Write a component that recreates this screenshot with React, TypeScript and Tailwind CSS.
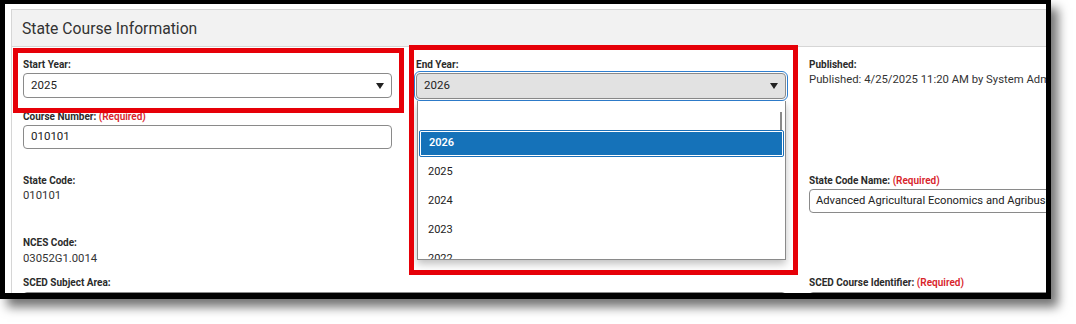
import React from "react";

const Caret = () => (
  <svg width="8" height="6" viewBox="0 0 8 6" className="shrink-0">
    <path d="M0 0 L8 0 L4 6 Z" fill="#222" />
  </svg>
);

const Label = ({ text, required }: { text: string; required?: boolean }) => (
  <div className="h-[13px] leading-[13px] text-[10px] font-bold text-[#2b2b2b] whitespace-nowrap">
    {text}
    {required && <span className="text-[#d8232a] font-semibold"> (Required)</span>}
  </div>
);

const Value = ({ text, className = "" }: { text: string; className?: string }) => (
  <div className={"h-[14px] leading-[14px] text-[11.3px] text-[#333] whitespace-nowrap " + className}>{text}</div>
);

export default function App() {
  const years = ["2025", "2024", "2023", "2022"];
  return (
    <div className="relative w-[1076px] h-[324px] bg-white overflow-hidden" style={{ fontFamily: "Roboto, 'Liberation Sans', sans-serif" }}>
      <div className="w-[1051px] h-[299px] border-black border-l-[5px] border-t-4 border-r-[5px] border-b-[6px] bg-white overflow-hidden shadow-[7px_8px_10px_rgba(0,0,0,0.55)]">
        <div className="ml-[6px] mt-[5px] w-[1100px] h-[400px] border border-[#d6d6d6] bg-white">
          <div className="h-[37px] bg-[#f2f2f2] border-b border-[#d6d6d6] pl-[10px] pt-[1px] flex items-center text-[15.7px] text-[#333]">
            State Course Information
          </div>
          <div className="pl-[11px] pt-[11px]">
            {/* Row 1 */}
            <div className="grid grid-cols-[393px_393px_1fr] h-[52px]">
              <div className="w-[369px]">
                <Label text="Start Year:" />
                <div className="mt-[2px] h-[25px] border border-[#8a8a8a] rounded-[4px] bg-white flex items-center justify-between pl-[7px] pr-[7px]">
                  <span className="text-[11.5px] text-[#222]">2025</span>
                  <Caret />
                </div>
              </div>
              <div className="w-[370px] relative">
                <Label text="End Year:" />
                <div className="mt-[2px] h-[26px] border border-[#8a8a8a] rounded-[4px] bg-[#e2e2e2] flex items-center justify-between pl-[7px] pr-[7px] outline outline-1 outline-offset-1 outline-[#2f7fd0]">
                  <span className="text-[11.5px] text-[#222]">2026</span>
                  <Caret />
                </div>
              </div>
              <div>
                <Label text="Published:" />
                <Value text="Published: 4/25/2025 11:20 AM by System Administrator" className="mt-[2px]" />
              </div>
            </div>
            {/* Row 2 */}
            <div className="grid grid-cols-[393px_393px_1fr] h-[64px]">
              <div className="w-[369px]">
                <Label text="Course Number:" required />
                <div className="mt-[2px] h-[24px] border border-[#8a8a8a] rounded-[4px] bg-white flex items-center pl-[7px]">
                  <span className="text-[11.5px] text-[#222]">010101</span>
                </div>
              </div>
              <div />
              <div />
            </div>
            {/* Row 3 */}
            <div className="grid grid-cols-[393px_393px_1fr] h-[62px]">
              <div>
                <Label text="State Code:" />
                <Value text="010101" className="mt-[2px]" />
              </div>
              <div />
              <div>
                <Label text="State Code Name:" required />
                <div className="mt-[2px] h-[24px] w-[370px] border border-[#8a8a8a] rounded-[4px] bg-white flex items-center pl-[6px]">
                  <span className="text-[11.2px] text-[#222] whitespace-nowrap">Advanced Agricultural Economics and Agribusiness</span>
                </div>
              </div>
            </div>
            {/* Row 4 */}
            <div className="grid grid-cols-[393px_393px_1fr] h-[40px]">
              <div>
                <Label text="NCES Code:" />
                <Value text="03052G1.0014" className="mt-[3px]" />
              </div>
              <div />
              <div />
            </div>
            {/* Row 5 */}
            <div className="grid grid-cols-[393px_393px_1fr]">
              <div className="col-span-2">
                <Label text="SCED Subject Area:" />
                <div className="mt-[3px] h-[25px] w-[763px] border border-[#8a8a8a] rounded-[4px] bg-white" />
              </div>
              <div>
                <Label text="SCED Course Identifier:" required />
                <div className="mt-[3px] h-[25px] w-[370px] border border-[#8a8a8a] rounded-[4px] bg-white" />
              </div>
            </div>
          </div>
        </div>
      </div>

      {/* Open dropdown list */}
      <div className="absolute left-[417px] top-[101px] w-[369px] h-[159px] bg-white border-x border-b border-[#8a8a8a] shadow-[0_4px_8px_rgba(0,0,0,0.25)] overflow-hidden">
        <div className="absolute right-[3px] top-[11px] w-[2px] h-[18px] bg-[#8a8a8a]" />
        <div className="h-[28px]" />
        <div className="h-[29px] px-[1px] py-[1px]">
          <div className="h-full border border-[#1a6fb8] rounded-[2px] p-[1px]">
            <div className="h-full bg-[#1572b9] flex items-center pl-[8px] text-[11px] font-semibold text-white">2026</div>
          </div>
        </div>
        {years.map((y) => (
          <div key={y} className="h-[29px] flex items-center pl-[10px] text-[11px] text-[#222]">
            {y}
          </div>
        ))}
      </div>

      {/* Red annotation boxes */}
      <div className="absolute left-[13px] top-[48px] w-[391px] h-[65px] border-[5px] border-[#e60008]" />
      <div className="absolute left-[409px] top-[45px] w-[389px] h-[230px] border-[5px] border-[#e60008]" />
    </div>
  );
}
